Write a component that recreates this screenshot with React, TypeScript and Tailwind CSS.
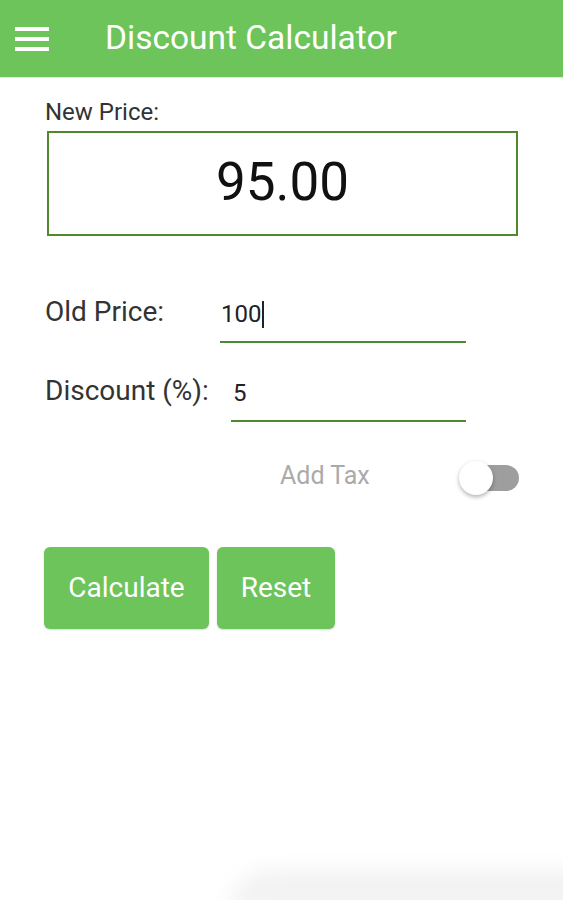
import React from "react";

export default function App() {
  return (
    <div className="relative w-[563px] h-[900px] bg-white overflow-hidden" style={{ fontFamily: "Roboto, 'Noto Sans', sans-serif" }}>
      <div className="h-[78px] bg-[#6cc45b] flex items-center border-b border-[#d9efd4]">
        <div className="ml-[15px] w-[34px] flex flex-col gap-[6px]">
          <div className="h-[4px] bg-white" />
          <div className="h-[4px] bg-white" />
          <div className="h-[4px] bg-white" />
        </div>
        <div className="ml-[56px] text-white text-[33.5px] leading-none pb-[2px]">Discount Calculator</div>
      </div>

      <div className="pl-[45px] pt-[22px]">
        <div className="text-[24px] leading-none text-[#333]">New Price:</div>
        <div className="ml-[2px] mt-[7px] w-[471px] h-[105px] border-[2px] border-[#4e8a2c] flex items-center justify-center">
          <span className="text-[53px] text-[#111] leading-none pb-[3px]">95.00</span>
        </div>

        <div className="mt-[62px] flex items-end">
          <div className="w-[175px] text-[28px] text-[#333] leading-none pb-[17px]">Old Price:</div>
          <div className="w-[246px] border-b-[2px] border-[#4e8a2c] h-[45px] flex items-start pt-[4px] pl-[1px]">
            <span className="text-[24px] text-[#222] leading-none">100</span>
            <span className="w-[2px] h-[27px] bg-[#222] -mt-[1px] ml-[1px]" />
          </div>
        </div>

        <div className="mt-[34px] flex items-end">
          <div className="w-[186px] text-[28px] text-[#333] leading-none pb-[17px]">Discount (%):</div>
          <div className="w-[235px] border-b-[2px] border-[#4e8a2c] h-[45px] flex items-start pt-[4px] pl-[2px]">
            <span className="text-[24px] text-[#222] leading-none">5</span>
          </div>
        </div>

        <div className="mt-[39px] flex items-center h-[34px]">
          <div className="ml-[235px] text-[25px] text-[#aaa] leading-none pb-[6px]">Add Tax</div>
          <div className="relative ml-[89px] w-[60px] h-[34px]">
            <div className="absolute left-[17px] top-[4px] w-[43px] h-[26px] rounded-full bg-[#9e9e9e]" />
            <div className="absolute left-0 top-0 w-[34px] h-[34px] rounded-full bg-white shadow-[0_2px_4px_rgba(0,0,0,0.3)]" />
          </div>
        </div>

        <div className="mt-[52px] flex gap-[8px]">
          <button className="w-[165px] h-[82px] rounded-[6px] bg-[#6cc45b] text-white text-[28px] shadow-[0_1px_2px_rgba(0,0,0,0.15)] -ml-[1px]">Calculate</button>
          <button className="w-[118px] h-[82px] rounded-[6px] bg-[#6cc45b] text-white text-[28px] shadow-[0_1px_2px_rgba(0,0,0,0.15)]">Reset</button>
        </div>
      </div>

      <div className="absolute left-[230px] right-[-20px] bottom-[-10px] h-[40px] bg-[#f2f2f2] rounded-tl-[60px] blur-[10px]" />
    </div>
  );
}
